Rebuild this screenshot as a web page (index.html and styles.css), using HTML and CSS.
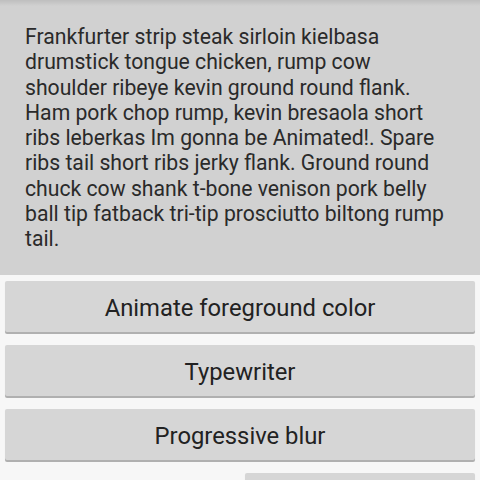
FILE: index.html
```html
<!DOCTYPE html>
<html>
<head>
<meta charset="utf-8">
<link rel="stylesheet" href="styles.css">
</head>
<body>
<div class="panel">
  <p class="story">Frankfurter strip steak sirloin kielbasa drumstick tongue chicken, rump cow shoulder ribeye kevin ground round flank. Ham pork chop rump, kevin bresaola short ribs leberkas Im gonna be Animated!. Spare ribs tail short ribs jerky flank. Ground round chuck cow shank t-bone venison pork belly ball tip fatback tri-tip prosciutto biltong rump tail.</p>
</div>
<div class="buttons">
  <button class="btn full">Animate foreground color</button>
  <button class="btn full">Typewriter</button>
  <button class="btn full">Progressive blur</button>
  <button class="btn half"></button>
</div>
</body>
</html>
```
FILE: styles.css
```css
html, body {
  margin: 0;
  padding: 0;
  background: #f7f7f7;
  font-family: Roboto, "Noto Sans", sans-serif;
  overflow: hidden;
  height: 480px;
}
.panel {
  background: #d1d1d1;
  height: 275px;
  box-sizing: border-box;
  padding: 24px 25px 0 25px;
  background-image: linear-gradient(to bottom, rgba(0,0,0,0.09), rgba(0,0,0,0) 6px);
}
.story {
  margin: 0;
  font-size: 21.2px;
  line-height: 25.3px;
  color: #2a2a2a;
}
.buttons {
  display: grid;
  grid-template-columns: 1fr 1fr;
  column-gap: 10px;
  row-gap: 11px;
  padding: 6px 5px 0 5px;
}
.btn {
  border: none;
  border-radius: 2px;
  background: #d6d6d6;
  box-shadow: 0 2px 0 #b0b0b0, 0 1px 1px rgba(0,0,0,0.1);
  font-family: Roboto, "Noto Sans", sans-serif;
  font-size: 23.8px;
  color: #222222;
  padding: 3px 0 0 0;
  height: 51px;
}
.btn.full {
  grid-column: 1 / 3;
  margin-bottom: 2px;
}
.btn.half {
  grid-column: 2 / 3;
}
```
